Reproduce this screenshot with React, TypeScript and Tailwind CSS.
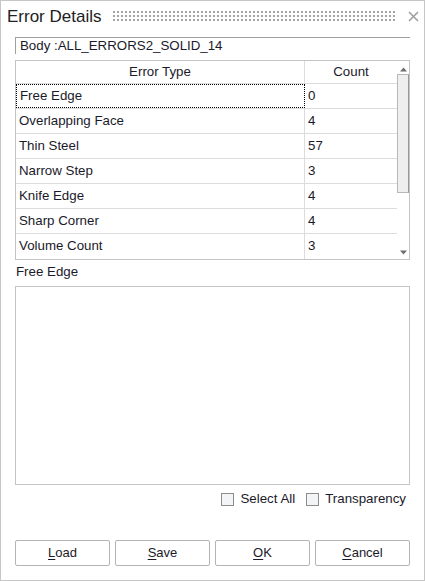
import React from "react";

const rows = [
  { name: "Free Edge", count: "0" },
  { name: "Overlapping Face", count: "4" },
  { name: "Thin Steel", count: "57" },
  { name: "Narrow Step", count: "3" },
  { name: "Knife Edge", count: "4" },
  { name: "Sharp Corner", count: "4" },
  { name: "Volume Count", count: "3" },
];

function Btn({ label }: { label: string }) {
  return (
    <button className="h-[26px] w-[95px] border border-[#b4b4b4] bg-white rounded-[2px] text-[13px] text-[#1a1a2a]">
      <span className="underline underline-offset-2">{label[0]}</span>
      {label.slice(1)}
    </button>
  );
}

function Check({ label }: { label: string }) {
  return (
    <label className="flex items-center gap-[6px]">
      <span className="w-[13px] h-[13px] border border-[#8c8c8c] bg-[#f2f4f6]" />
      <span>{label}</span>
    </label>
  );
}

export default function App() {
  return (
    <div className="w-[425px] h-[581px] bg-white border border-[#c6c6c6] flex flex-col text-[13.3px] text-[#1a1a2a] font-['Liberation_Sans',Arial,sans-serif]">
      {/* title */}
      <div className="h-[31px] flex items-center pl-[6px] pr-[5px]">
        <span className="text-[17px] text-[#222]">Error Details</span>
        <div className="flex-1 ml-[12px] mr-[12px] h-[12px] bg-[radial-gradient(circle_at_1px_1px,#a4a4a4_1px,transparent_1px)] bg-[length:4px_4px]" />
        <svg width="11" height="11" viewBox="0 0 11 11" className="mb-[1px]">
          <path d="M1 1 L10 10 M10 1 L1 10" stroke="#a0a0a0" strokeWidth="1.6" />
        </svg>
      </div>

      <div className="px-[14px] flex flex-col">
        {/* body field */}
        <div className="mt-[5px] h-[17px] border-t border-l border-[#a0a0a0] pl-[4px] leading-[16px]">
          Body :ALL_ERRORS2_SOLID_14
        </div>

        {/* table */}
        <div className="mt-[6px] h-[200px] border border-[#c4c4c4] flex">
          <div className="flex-1 flex flex-col">
            <div className="h-[23px] flex border-b border-[#dcdcdc]">
              <div className="w-[289px] text-center leading-[21px] border-r border-[#dcdcdc]">Error Type</div>
              <div className="flex-1 text-center leading-[21px]">Count</div>
            </div>
            {rows.map((r, i) => (
              <div key={r.name} className={"h-[25px] flex " + (i < rows.length - 1 ? "border-b border-[#dcdcdc]" : "")}>
                <div
                  className={
                    "w-[289px] pl-[3px] " +
                    (i === 0 ? "border border-dotted border-black leading-[21px]" : "border-r border-[#dcdcdc] leading-[23px]")
                  }
                >
                  {r.name}
                </div>
                <div className="flex-1 pl-[3px] leading-[23px]">{r.count}</div>
              </div>
            ))}
          </div>
          {/* scrollbar */}
          <div className="w-[12px] flex flex-col items-center">
            <svg width="7" height="5" viewBox="0 0 7 5" className="mt-[6px]">
              <path d="M3.5 0.5 L7 4.5 L0 4.5 Z" fill="#6e6e6e" />
            </svg>
            <div className="mt-[2px] w-[12px] h-[119px] bg-[#efefef] border border-[#b8b8b8] border-r-[#999]" />
            <div className="flex-1" />
            <svg width="7" height="5" viewBox="0 0 7 5" className="mb-[4px]">
              <path d="M0 0.5 L7 0.5 L3.5 4.5 Z" fill="#6e6e6e" />
            </svg>
          </div>
        </div>

        <div className="mt-[4px] h-[16px] leading-[16px] pl-[1px]">Free Edge</div>

        <div className="mt-[6px] h-[199px] border border-[#c4c4c4]" />

        <div className="mt-[6px] h-[16px] flex justify-end gap-[11px] pr-[4px]">
          <Check label="Select All" />
          <Check label="Transparency" />
        </div>

        <div className="mt-[33px] flex justify-between">
          <Btn label="Load" />
          <Btn label="Save" />
          <Btn label="OK" />
          <Btn label="Cancel" />
        </div>
      </div>
    </div>
  );
}
